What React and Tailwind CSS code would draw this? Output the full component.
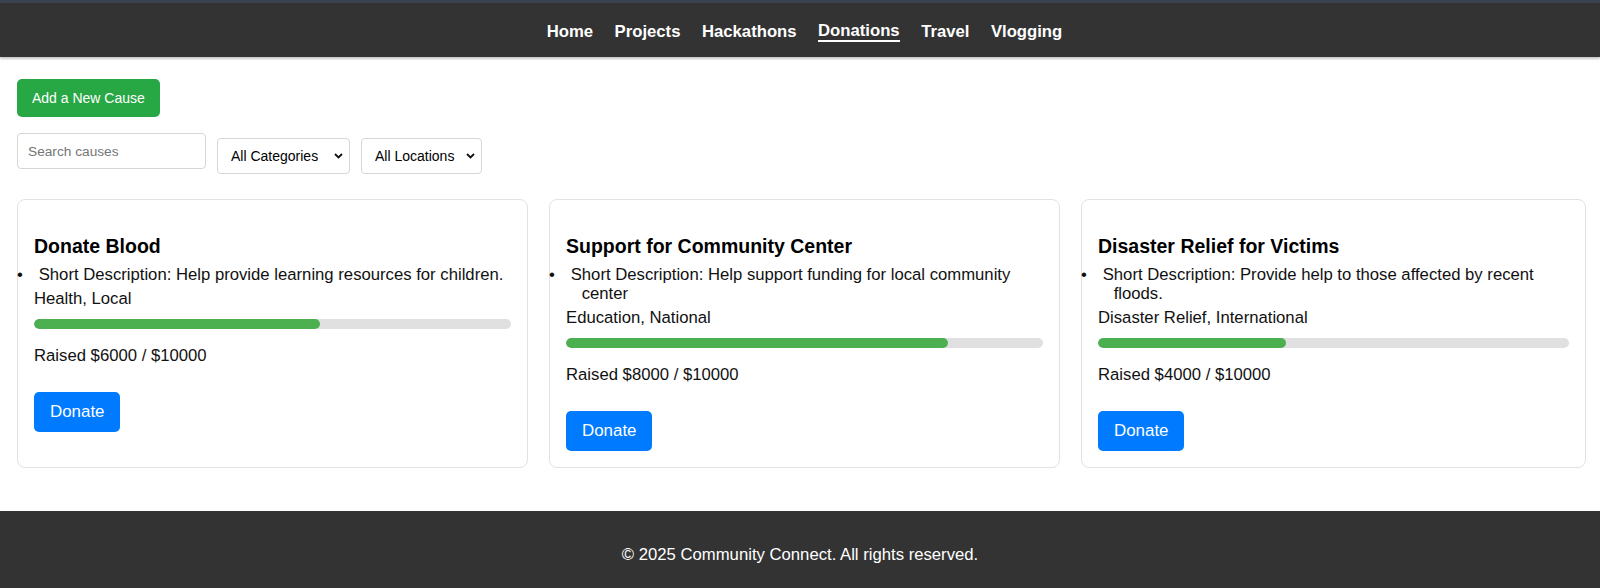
import { useState } from 'react';

const causes = [
  {
    id: 1,
    title: 'Donate Blood',
    description: 'Help provide learning resources for children.',
    category: 'Health',
    location: 'Local',
    raised: 6000,
    goal: 10000,
    width: 'w-[511px]',
  },
  {
    id: 2,
    title: 'Support for Community Center',
    description: 'Help support funding for local community center',
    category: 'Education',
    location: 'National',
    raised: 8000,
    goal: 10000,
    width: 'w-[511px]',
  },
  {
    id: 3,
    title: 'Disaster Relief for Victims',
    description: 'Provide help to those affected by recent floods.',
    category: 'Disaster Relief',
    location: 'International',
    raised: 4000,
    goal: 10000,
    width: 'w-[505px]',
  },
];

const navLinks = ['Home', 'Projects', 'Hackathons', 'Donations', 'Travel', 'Vlogging'];

function Chevron() {
  return (
    <svg width="9" height="6" viewBox="0 0 9 6" className="pointer-events-none absolute right-[7px] top-[15px]">
      <path d="M1 1l3.5 3.5L8 1" fill="none" stroke="#111" strokeWidth="1.8" />
    </svg>
  );
}

function FilterSelect({ options, width }) {
  return (
    <div className={`relative mt-[5px] ${width}`}>
      <select className="h-[36px] w-full appearance-none rounded-[4px] border border-[#d6d6d6] bg-white pl-[13px] text-[14px] text-black outline-none">
        {options.map((o) => (
          <option key={o}>{o}</option>
        ))}
      </select>
      <Chevron />
    </div>
  );
}

function CauseCard({ cause }) {
  const pct = Math.round((cause.raised / cause.goal) * 100);

  return (
    <div className={`${cause.width} flex shrink-0 flex-col rounded-[8px] border border-[#e2e2e2] bg-white px-[16px] pt-[16px] pb-[16px]`}>
      <h3 className="mt-[20px] text-[19.5px] font-bold leading-[21px] text-black">{cause.title}</h3>

      {/* Description with bullet */}
      <div className="-ml-[17px] mt-[8px] flex leading-[19px]">
        <span className="w-[21.7px] shrink-0">•</span>
        <p className="pl-[11px]">
          <span className="-ml-[11px]">Short Description: {cause.description}</span>
        </p>
      </div>

      <p className="mt-[5px] leading-[19px]">
        {cause.category}, {cause.location}
      </p>

      {/* Progress */}
      <div className="mt-[11px] h-[10px] w-full overflow-hidden rounded-full bg-[#e0e0e0]">
        <div className="h-full rounded-full bg-[#4caf50]" style={{ width: `${pct}%` }} />
      </div>

      <p className="mt-[17px] leading-[19px]">
        Raised ${cause.raised} / ${cause.goal}
      </p>

      <div className="mt-[27px]">
        <button className="h-[40px] rounded-[5px] bg-[#007bff] px-[16px] text-[16.9px] text-white">
          Donate
        </button>
      </div>
    </div>
  );
}

export default function App() {
  const [query, setQuery] = useState('');

  return (
    <div className="min-h-[588px] bg-white text-[16.7px] text-[#111] [font-family:'Liberation_Sans',Arial,sans-serif]">
      {/* Header */}
      <header className="relative z-10 h-[57px] border-t-[3px] border-[#3a4252] bg-[#333333] pt-[2px] shadow-[0_2px_2px_rgba(0,0,0,0.22)]">
        <nav className="flex h-full items-center justify-center gap-[21.5px] pl-[9px]">
          {navLinks.map((link) => (
            <a
              key={link}
              href="#"
              className={`font-bold leading-[19px] text-white ${link === 'Donations' ? 'border-b-2 border-white' : ''}`}
            >
              {link}
            </a>
          ))}
        </nav>
      </header>

      {/* Main */}
      <main className="pl-[17px] pt-[22px]">
        <button className="h-[38px] rounded-[5px] bg-[#28a745] px-[15px] text-[14px] text-white">
          Add a New Cause
        </button>

        <div className="mt-[16px] flex items-start gap-[11px]">
          <input
            value={query}
            onChange={(e) => setQuery(e.target.value)}
            placeholder="Search causes"
            className="h-[36px] w-[189px] rounded-[4px] border border-[#d6d6d6] px-[10px] text-[13.7px] outline-none placeholder:text-[#757575]"
          />
          <FilterSelect width="w-[133px]" options={['All Categories', 'Health', 'Education', 'Disaster Relief']} />
          <FilterSelect width="w-[121px]" options={['All Locations', 'Local', 'National', 'International']} />
        </div>

        <div className="mt-[25px] flex items-stretch gap-[21px]">
          {causes.map((cause) => (
            <CauseCard key={cause.id} cause={cause} />
          ))}
        </div>
      </main>

      {/* Footer */}
      <footer className="mt-[43px] h-[78px] bg-[#333333] pt-[34px] text-center leading-[19px] text-white">
        © 2025 Community Connect. All rights reserved.
      </footer>
    </div>
  );
}
